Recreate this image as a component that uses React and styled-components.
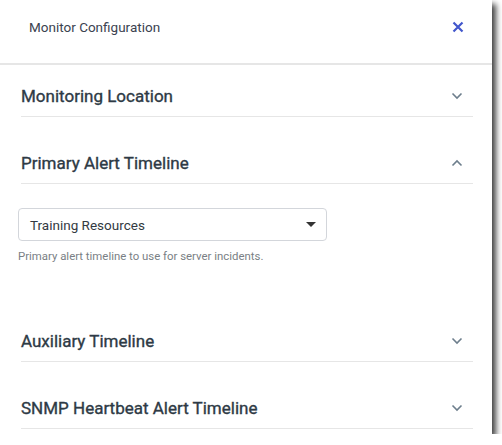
import React from 'react'
import styled, { createGlobalStyle } from 'styled-components'

const GlobalStyle = createGlobalStyle`
  html, body {
    margin: 0;
    padding: 0;
    background: #ffffff;
  }
  body {
    font-family: Roboto, 'Noto Sans', sans-serif;
  }
`

const Panel = styled.div`
  width: 492px;
  height: 434px;
  background: #ffffff;
  box-shadow: 4px 4px 6px rgba(0, 0, 0, 0.75);
  overflow: hidden;
  display: flex;
  flex-direction: column;
`

const Header = styled.div`
  height: 65px;
  flex-shrink: 0;
  display: flex;
  align-items: center;
  justify-content: space-between;
  padding: 0 28px 9px 29px;
  box-sizing: border-box;
  border-bottom: 2px solid #e6e6e6;
`

const Title = styled.span`
  font-size: 13.5px;
  color: #3b4250;
`

const CloseButton = styled.button`
  border: 0;
  background: none;
  padding: 0;
  display: flex;
  color: #4257cc;
  cursor: pointer;
`

const Body = styled.div`
  padding: 0 19px 0 21px;
  display: flex;
  flex-direction: column;
`

const Section = styled.div`
  margin-top: ${({ $first }) => ($first ? '0' : '15px')};
`

const SectionHead = styled.div`
  height: 52px;
  box-sizing: border-box;
  padding: 19px 10px 9px 0;
  display: flex;
  align-items: center;
  justify-content: space-between;
  border-bottom: 1px solid #e6e6e6;
`

const SectionTitle = styled.span`
  font-size: 17px;
  font-weight: 400;
  -webkit-text-stroke: 0.35px #2e3a45;
  color: #2e3a45;
`

const Content = styled.div`
  padding: 24px 0 32px 0;
  margin-left: -3px;
`

const Select = styled.div`
  width: 309px;
  height: 33px;
  box-sizing: border-box;
  border: 1px solid #d3d6db;
  border-radius: 4px;
  display: flex;
  align-items: center;
  justify-content: space-between;
  padding: 0 10px 0 11px;
  font-size: 13.5px;
  color: #333a42;
`

const Help = styled.div`
  margin-top: 8px;
  font-size: 11.4px;
  color: #7a7f85;
`

const Chevron = ({ up }) => (
  <svg width="12" height="8" viewBox="0 0 12 8">
    <path
      d={up ? 'M1.5 6.5 L6 2 L10.5 6.5' : 'M1.5 1.5 L6 6 L10.5 1.5'}
      fill="none"
      stroke="#6d7e8c"
      strokeWidth="1.6"
    />
  </svg>
)

const sections = [
  { title: 'Monitoring Location' },
  { title: 'Primary Alert Timeline', open: true },
  { title: 'Auxiliary Timeline' },
  { title: 'SNMP Heartbeat Alert Timeline' },
]

const App = () => (
  <>
    <GlobalStyle />
    <Panel>
      <Header>
        <Title>Monitor Configuration</Title>
        <CloseButton aria-label="Close">
          <svg width="12" height="12" viewBox="0 0 12 12">
            <path d="M1.5 1.5 L10.5 10.5 M10.5 1.5 L1.5 10.5" stroke="currentColor" strokeWidth="2.2" />
          </svg>
        </CloseButton>
      </Header>
      <Body>
        {sections.map((s, i) => (
          <Section key={s.title} $first={i === 0}>
            <SectionHead>
              <SectionTitle>{s.title}</SectionTitle>
              <Chevron up={s.open} />
            </SectionHead>
            {s.open && (
              <Content>
                <Select>
                  Training Resources
                  <svg width="10" height="5" viewBox="0 0 10 5">
                    <path d="M0 0 L10 0 L5 5 Z" fill="#333" />
                  </svg>
                </Select>
                <Help>Primary alert timeline to use for server incidents.</Help>
              </Content>
            )}
          </Section>
        ))}
      </Body>
    </Panel>
  </>
)

export default App
